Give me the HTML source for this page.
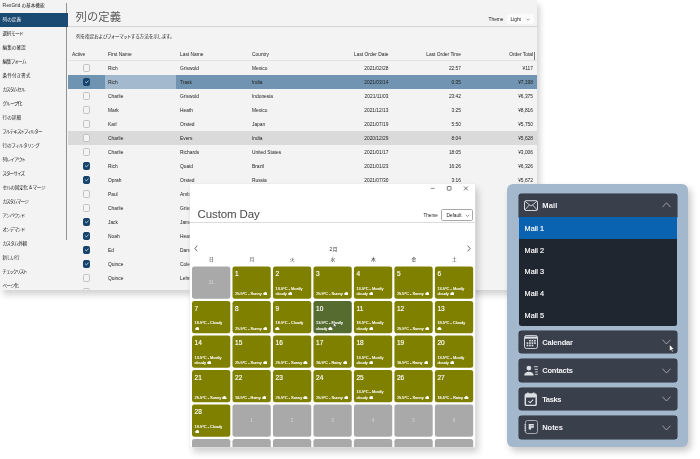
<!DOCTYPE html>
<html lang="ja"><head><meta charset="utf-8"><title>UI</title>
<style>
*{box-sizing:border-box;margin:0;padding:0}
html,body{width:700px;height:459px;overflow:hidden;background:#fff}
body{position:relative;font-family:"Liberation Sans","Noto Sans CJK JP",sans-serif;color:#222}
.abs{position:absolute}
#w1,#w2,#w3{will-change:transform}
#w1{position:absolute;left:0;top:0;width:537px;height:290px;background:#f3f3f3;box-shadow:3px 5px 6px rgba(0,0,0,.17);overflow:hidden}
#w1 .side{position:absolute;left:0;top:0;width:68px;height:290px}
#w1 .si{font-feature-settings:"palt";position:absolute;left:0;width:68px;height:14px;line-height:14px;font-size:4.6px;padding-left:2.5px;color:#222;white-space:nowrap}
#w1 .si.sel{background:#1b4a73;color:#fff}
#w1 .vbar{position:absolute;left:66px;top:3px;width:1px;height:237px;background:#929292}
#w1 h1{position:absolute;left:75.5px;top:9.2px;font-size:11.3px;line-height:16px;font-weight:normal;color:#5a5a5a;letter-spacing:.1px}
#w1 .hr{position:absolute;left:68px;top:26px;width:469px;height:1px;background:#d4d4d4}
#w1 .desc{position:absolute;left:76px;top:32px;font-size:4.6px;line-height:10px;color:#222;white-space:nowrap;font-feature-settings:"palt";letter-spacing:.08px}
#w1 .thl{position:absolute;left:488.6px;top:14.9px;font-size:4.8px;line-height:10px;color:#222}
#w1 .thb{position:absolute;left:507px;top:14px;width:27px;height:10px;background:#fbfbfb;border-radius:1.5px;font-size:4.8px;line-height:11.8px;padding-left:3.5px;color:#222}
.row{position:absolute;left:68px;width:469px;height:14px;font-size:4.85px;line-height:14px;color:#222;white-space:nowrap}
.row span{position:absolute;top:1.1px}
.row .c1{left:40px}.row .c2{left:112px}.row .c3{left:184px}
.row .c4{right:148.5px}.row .c5{right:76px}.row .c6{right:4px}
.row.hd{color:#222}
.row.selr{background:#7094b1}
.row.selr .a{position:absolute;left:0;top:0;width:36.5px;height:14px;background:#6e94b2}
.row.selr .b{position:absolute;left:36.5px;top:0;width:71.5px;height:14px;background:#a3bace}
.row.alt{background:#dadada}
.cb{position:absolute;left:14.7px;top:3.3px;width:7.6px;height:7.6px;border:.6px solid #c2c2c2;border-radius:1.7px;background:#f4f4f4}
.cb.on{background:#17446c;border-color:#17446c}
.cb.on svg{position:absolute;left:0;top:0;width:100%;height:100%}

#w2{position:absolute;left:190px;top:184px;width:284.6px;height:263px;background:#fff;box-shadow:0 0 0 .4px #e6e6e6,3px 5px 7px rgba(0,0,0,.2);overflow:hidden}
#w2 h2{position:absolute;left:7.5px;top:20px;font-size:11.5px;line-height:20px;font-weight:normal;color:#484848;white-space:nowrap;letter-spacing:-.1px}
#w2 .hr{position:absolute;left:0;top:38px;width:285px;height:1px;background:#dcdcdc}
#w2 .thl{position:absolute;left:233.5px;top:26.5px;font-size:4.6px;line-height:10px;color:#222}
#w2 .thb{position:absolute;left:251.2px;top:25.3px;width:32px;height:12.2px;border:.6px solid #a8a8a8;border-radius:1.7px;font-size:4.8px;line-height:11px;padding-left:4.2px;color:#222;background:#fff}
#w2 .mon{position:absolute;left:1.5px;width:284px;top:60px;text-align:center;font-size:5px;line-height:10px;color:#333}
#w2 .dh{position:absolute;top:70.8px;width:39px;text-align:center;font-size:4.8px;line-height:10px;color:#333}
.cell{position:absolute;width:38.3px;height:32.4px;color:#fff}
.cell .n{position:absolute;left:2.6px;top:2.7px;font-size:6.5px;line-height:9px;-webkit-text-stroke:.15px #fff}
.cell .gn{position:absolute;left:0;top:12px;width:100%;text-align:center;font-size:4.6px;line-height:10px;color:#d6d6d6}
.cell .w{position:absolute;left:2.5px;bottom:2.5px;font-size:3.95px;line-height:5.2px;white-space:nowrap;color:#fff;-webkit-text-stroke:.12px #fff}
.cell .w svg{display:inline-block;width:4.4px;height:3.1px;vertical-align:-.45px}

#w3{position:absolute;left:507px;top:184px;width:181px;height:263px;background:#a3b8cc;border-radius:6px;box-shadow:3px 4px 7px rgba(0,0,0,.22)}
.ah{position:absolute;left:12.2px;width:157.6px;height:22.5px;background:#3a3f4c;border-radius:2.8px;color:#f2f3f5;font-size:7.5px;font-weight:bold;line-height:24.2px;padding-left:23px;box-shadow:0 0 0 .5px #2a2e38}
.ah svg.ic{position:absolute;left:5.3px;top:4.1px;width:14px;height:14px}
.ah svg.ch{position:absolute;right:5.4px;top:8.6px;width:9px;height:6px}
.ai{position:absolute;left:11.6px;width:158.2px;height:21.8px;background:#20262f;color:#fff;font-size:7.3px;line-height:23.6px;padding-left:6px;-webkit-text-stroke:.15px #fff}
.ai.sel{background:#0a63b1}
</style></head><body>

<div id="w1">
<div class="vbar"></div><div class="side">
<div class="si" style="top:-1.3px;letter-spacing:0.050px">FlexGrid の基本機能</div>
<div class="si sel" style="top:12.7px;letter-spacing:0.150px">列の定義</div>
<div class="si" style="top:26.7px;letter-spacing:-0.240px">選択モード</div>
<div class="si" style="top:40.7px;letter-spacing:0.100px">編集の確認</div>
<div class="si" style="top:54.7px;letter-spacing:-0.250px">編集フォーム</div>
<div class="si" style="top:68.7px;letter-spacing:0.167px">条件付き書式</div>
<div class="si" style="top:82.7px;letter-spacing:-0.483px">カスタムセル</div>
<div class="si" style="top:96.7px;letter-spacing:-0.400px">グループ化</div>
<div class="si" style="top:110.7px;letter-spacing:0.150px">行の詳細</div>
<div class="si" style="top:124.7px;letter-spacing:-0.427px">フルテキストフィルター</div>
<div class="si" style="top:138.7px;letter-spacing:0.056px">行のフィルタリング</div>
<div class="si" style="top:152.7px;letter-spacing:-0.333px">列レイアウト</div>
<div class="si" style="top:166.7px;letter-spacing:-0.517px">スターサイズ</div>
<div class="si" style="top:180.7px;letter-spacing:-0.242px">セルの固定化 &amp; マージ</div>
<div class="si" style="top:194.7px;letter-spacing:-0.571px">カスタムマージ</div>
<div class="si" style="top:208.7px;letter-spacing:-0.400px">アンバウンド</div>
<div class="si" style="top:222.7px;letter-spacing:-0.400px">オンデマンド</div>
<div class="si" style="top:236.7px;letter-spacing:-0.267px">カスタム外観</div>
<div class="si" style="top:250.7px;letter-spacing:-0.100px">新しい行</div>
<div class="si" style="top:264.7px;letter-spacing:-0.400px">チェックリスト</div>
<div class="si" style="top:278.7px;letter-spacing:-0.600px">ページ化</div>
</div>
<h1>列の定義</h1><div class="hr"></div>
<div class="thl">Theme</div><div class="thb">Light<svg class="abs" style="left:19px;top:4px;width:4.2px;height:3px" viewBox="0 0 8 5"><path d="M1 1 L4 4 L7 1" fill="none" stroke="#555" stroke-width="1"/></svg></div>
<div class="desc">列を指定およびフォーマットする方法を示します。</div>
<div class="row hd" style="top:46.9px"><span style="left:4px">Active</span><span class="c1">First Name</span><span class="c2">Last Name</span><span class="c3">Country</span><span class="c4">Last Order Date</span><span class="c5">Last Order Time</span><span class="c6">Order Total</span></div>
<div class="abs" style="left:68px;top:60px;width:469px;height:.6px;background:#e2e2e2"></div>
<div class="abs" style="left:534.2px;top:51.5px;width:.6px;height:8px;background:#777"></div>
<div class="row" style="top:61px">
<div class="cb"></div>
<span class="c1">Rich</span><span class="c2">Griswold</span><span class="c3">Mexico</span><span class="c4">2021/02/28</span><span class="c5">22:57</span><span class="c6">¥117</span></div>
<div class="row selr" style="top:75px">
<div class="a"></div><div class="b"></div>
<div class="cb on"><svg viewBox="0 0 10 10"><path d="M2.4 5.2 L4.3 7 L7.8 3.2" fill="none" stroke="#fff" stroke-width="1.2" stroke-linecap="round" stroke-linejoin="round"/></svg></div>
<span class="c1">Rich</span><span class="c2">Trask</span><span class="c3">India</span><span class="c4">2021/03/14</span><span class="c5">0:35</span><span class="c6">¥7,198</span></div>
<div class="row" style="top:89px">
<div class="cb"></div>
<span class="c1">Charlie</span><span class="c2">Griswold</span><span class="c3">Indonesia</span><span class="c4">2021/11/03</span><span class="c5">23:42</span><span class="c6">¥6,375</span></div>
<div class="row" style="top:103px">
<div class="cb"></div>
<span class="c1">Mark</span><span class="c2">Heath</span><span class="c3">Mexico</span><span class="c4">2021/12/13</span><span class="c5">3:25</span><span class="c6">¥8,816</span></div>
<div class="row" style="top:117px">
<div class="cb"></div>
<span class="c1">Karl</span><span class="c2">Orsted</span><span class="c3">Japan</span><span class="c4">2021/07/19</span><span class="c5">5:50</span><span class="c6">¥5,750</span></div>
<div class="row alt" style="top:131px">
<div class="cb"></div>
<span class="c1">Charlie</span><span class="c2">Evers</span><span class="c3">India</span><span class="c4">2020/12/29</span><span class="c5">8:04</span><span class="c6">¥5,628</span></div>
<div class="row" style="top:145px">
<div class="cb"></div>
<span class="c1">Charlie</span><span class="c2">Richards</span><span class="c3">United States</span><span class="c4">2021/01/17</span><span class="c5">18:05</span><span class="c6">¥3,006</span></div>
<div class="row" style="top:159px">
<div class="cb on"><svg viewBox="0 0 10 10"><path d="M2.4 5.2 L4.3 7 L7.8 3.2" fill="none" stroke="#fff" stroke-width="1.2" stroke-linecap="round" stroke-linejoin="round"/></svg></div>
<span class="c1">Rich</span><span class="c2">Quaid</span><span class="c3">Brazil</span><span class="c4">2021/01/23</span><span class="c5">16:26</span><span class="c6">¥6,326</span></div>
<div class="row" style="top:173px">
<div class="cb on"><svg viewBox="0 0 10 10"><path d="M2.4 5.2 L4.3 7 L7.8 3.2" fill="none" stroke="#fff" stroke-width="1.2" stroke-linecap="round" stroke-linejoin="round"/></svg></div>
<span class="c1">Oprah</span><span class="c2">Orsted</span><span class="c3">Russia</span><span class="c4">2021/07/30</span><span class="c5">3:16</span><span class="c6">¥5,672</span></div>
<div class="row" style="top:187px">
<div class="cb"></div>
<span class="c1">Paul</span><span class="c2">Ambers</span><span class="c3">Germany</span><span class="c4">2021/05/09</span><span class="c5">11:42</span><span class="c6">¥1,204</span></div>
<div class="row" style="top:201px">
<div class="cb"></div>
<span class="c1">Charlie</span><span class="c2">Griswold</span><span class="c3">Italy</span><span class="c4">2021/08/21</span><span class="c5">9:18</span><span class="c6">¥4,391</span></div>
<div class="row" style="top:215px">
<div class="cb on"><svg viewBox="0 0 10 10"><path d="M2.4 5.2 L4.3 7 L7.8 3.2" fill="none" stroke="#fff" stroke-width="1.2" stroke-linecap="round" stroke-linejoin="round"/></svg></div>
<span class="c1">Jack</span><span class="c2">James</span><span class="c3">Greece</span><span class="c4">2021/04/02</span><span class="c5">14:07</span><span class="c6">¥2,870</span></div>
<div class="row" style="top:229px">
<div class="cb on"><svg viewBox="0 0 10 10"><path d="M2.4 5.2 L4.3 7 L7.8 3.2" fill="none" stroke="#fff" stroke-width="1.2" stroke-linecap="round" stroke-linejoin="round"/></svg></div>
<span class="c1">Noah</span><span class="c2">Heath</span><span class="c3">Japan</span><span class="c4">2021/09/15</span><span class="c5">20:33</span><span class="c6">¥9,015</span></div>
<div class="row" style="top:243px">
<div class="cb on"><svg viewBox="0 0 10 10"><path d="M2.4 5.2 L4.3 7 L7.8 3.2" fill="none" stroke="#fff" stroke-width="1.2" stroke-linecap="round" stroke-linejoin="round"/></svg></div>
<span class="c1">Ed</span><span class="c2">Danson</span><span class="c3">Korea</span><span class="c4">2021/06/27</span><span class="c5">7:51</span><span class="c6">¥3,482</span></div>
<div class="row" style="top:257px">
<div class="cb on"><svg viewBox="0 0 10 10"><path d="M2.4 5.2 L4.3 7 L7.8 3.2" fill="none" stroke="#fff" stroke-width="1.2" stroke-linecap="round" stroke-linejoin="round"/></svg></div>
<span class="c1">Quince</span><span class="c2">Cole</span><span class="c3">Spain</span><span class="c4">2021/10/11</span><span class="c5">12:29</span><span class="c6">¥7,760</span></div>
<div class="row" style="top:271px">
<div class="cb"></div>
<span class="c1">Quince</span><span class="c2">Lehman</span><span class="c3">France</span><span class="c4">2021/02/05</span><span class="c5">1:44</span><span class="c6">¥6,143</span></div>
<div class="row" style="top:285px">
<div class="cb"></div>
<span class="c1"></span><span class="c2"></span><span class="c3"></span><span class="c4"></span><span class="c5"></span><span class="c6"></span></div>
</div>
<div id="w2">
<svg class="abs" style="left:238px;top:0;width:44px;height:9px" viewBox="0 0 44 9"><path d="M2.8 4.4 H6.6" stroke="#444" stroke-width=".6"/><rect x="19.3" y="2.5" width="3.7" height="3.7" rx=".5" fill="none" stroke="#333" stroke-width=".65"/><path d="M35.9 2.4 L39.9 6.4 M39.9 2.4 L35.9 6.4" stroke="#333" stroke-width=".65"/></svg>
<h2>Custom Day</h2><div class="hr"></div>
<div class="thl">Theme</div><div class="thb">Default<svg class="abs" style="left:23px;top:3.6px;width:5px;height:3.2px" viewBox="0 0 8 5"><path d="M1 1 L4 4 L7 1" fill="none" stroke="#555" stroke-width="1"/></svg></div>
<svg class="abs" style="left:4.4px;top:60.7px;width:4px;height:7px" viewBox="0 0 4 7"><path d="M3.3 .7 L.9 3.5 L3.3 6.3" fill="none" stroke="#444" stroke-width=".8"/></svg>
<svg class="abs" style="left:277px;top:61px;width:4px;height:7px" viewBox="0 0 4 7"><path d="M.7 .7 L3.1 3.5 L.7 6.3" fill="none" stroke="#444" stroke-width=".8"/></svg>
<div class="mon">2月</div>
<div class="dh" style="left:2.00px">日</div>
<div class="dh" style="left:42.48px">月</div>
<div class="dh" style="left:82.96px">火</div>
<div class="dh" style="left:123.44px">水</div>
<div class="dh" style="left:163.92px">木</div>
<div class="dh" style="left:204.40px">金</div>
<div class="dh" style="left:244.88px">土</div>
<svg class="abs" style="left:0;top:0;width:285px;height:263px" viewBox="0 0 285 263">
<rect x="2.00" y="82.45" width="38.3" height="32.4" rx="2.4" fill="#a9a9a9"/>
<rect x="42.48" y="82.45" width="38.3" height="32.4" rx="2.4" fill="#808000"/>
<rect x="82.96" y="82.45" width="38.3" height="32.4" rx="2.4" fill="#808000"/>
<rect x="123.44" y="82.45" width="38.3" height="32.4" rx="2.4" fill="#808000"/>
<rect x="163.92" y="82.45" width="38.3" height="32.4" rx="2.4" fill="#808000"/>
<rect x="204.40" y="82.45" width="38.3" height="32.4" rx="2.4" fill="#808000"/>
<rect x="244.88" y="82.45" width="38.3" height="32.4" rx="2.4" fill="#808000"/>
<rect x="2.00" y="116.95" width="38.3" height="32.4" rx="2.4" fill="#808000"/>
<rect x="42.48" y="116.95" width="38.3" height="32.4" rx="2.4" fill="#808000"/>
<rect x="82.96" y="116.95" width="38.3" height="32.4" rx="2.4" fill="#808000"/>
<rect x="123.44" y="116.95" width="38.3" height="32.4" rx="2.4" fill="#556b2f"/>
<rect x="163.92" y="116.95" width="38.3" height="32.4" rx="2.4" fill="#808000"/>
<rect x="204.40" y="116.95" width="38.3" height="32.4" rx="2.4" fill="#808000"/>
<rect x="244.88" y="116.95" width="38.3" height="32.4" rx="2.4" fill="#808000"/>
<rect x="2.00" y="151.45" width="38.3" height="32.4" rx="2.4" fill="#808000"/>
<rect x="42.48" y="151.45" width="38.3" height="32.4" rx="2.4" fill="#808000"/>
<rect x="82.96" y="151.45" width="38.3" height="32.4" rx="2.4" fill="#808000"/>
<rect x="123.44" y="151.45" width="38.3" height="32.4" rx="2.4" fill="#808000"/>
<rect x="163.92" y="151.45" width="38.3" height="32.4" rx="2.4" fill="#808000"/>
<rect x="204.40" y="151.45" width="38.3" height="32.4" rx="2.4" fill="#808000"/>
<rect x="244.88" y="151.45" width="38.3" height="32.4" rx="2.4" fill="#808000"/>
<rect x="2.00" y="185.95" width="38.3" height="32.4" rx="2.4" fill="#808000"/>
<rect x="42.48" y="185.95" width="38.3" height="32.4" rx="2.4" fill="#808000"/>
<rect x="82.96" y="185.95" width="38.3" height="32.4" rx="2.4" fill="#808000"/>
<rect x="123.44" y="185.95" width="38.3" height="32.4" rx="2.4" fill="#808000"/>
<rect x="163.92" y="185.95" width="38.3" height="32.4" rx="2.4" fill="#808000"/>
<rect x="204.40" y="185.95" width="38.3" height="32.4" rx="2.4" fill="#808000"/>
<rect x="244.88" y="185.95" width="38.3" height="32.4" rx="2.4" fill="#808000"/>
<rect x="2.00" y="220.45" width="38.3" height="32.4" rx="2.4" fill="#808000"/>
<rect x="42.48" y="220.45" width="38.3" height="32.4" rx="2.4" fill="#a9a9a9"/>
<rect x="82.96" y="220.45" width="38.3" height="32.4" rx="2.4" fill="#a9a9a9"/>
<rect x="123.44" y="220.45" width="38.3" height="32.4" rx="2.4" fill="#a9a9a9"/>
<rect x="163.92" y="220.45" width="38.3" height="32.4" rx="2.4" fill="#a9a9a9"/>
<rect x="204.40" y="220.45" width="38.3" height="32.4" rx="2.4" fill="#a9a9a9"/>
<rect x="244.88" y="220.45" width="38.3" height="32.4" rx="2.4" fill="#a9a9a9"/>
<rect x="2.00" y="254.95" width="38.3" height="32.4" rx="2.4" fill="#a9a9a9"/>
<rect x="42.48" y="254.95" width="38.3" height="32.4" rx="2.4" fill="#a9a9a9"/>
<rect x="82.96" y="254.95" width="38.3" height="32.4" rx="2.4" fill="#a9a9a9"/>
<rect x="123.44" y="254.95" width="38.3" height="32.4" rx="2.4" fill="#a9a9a9"/>
<rect x="163.92" y="254.95" width="38.3" height="32.4" rx="2.4" fill="#a9a9a9"/>
<rect x="204.40" y="254.95" width="38.3" height="32.4" rx="2.4" fill="#a9a9a9"/>
<rect x="244.88" y="254.95" width="38.3" height="32.4" rx="2.4" fill="#a9a9a9"/>
</svg>
<div class="cell g" style="left:2.00px;top:82.45px"><div class="gn">31</div></div>
<div class="cell" style="left:42.48px;top:82.45px"><div class="n">1</div><div class="w">25.5°C - Sunny <svg viewBox="0 0 12 8"><path d="M3 8 A3 3 0 0 1 3.2 2.1 A4 4 0 0 1 10.6 3.1 A2.5 2.5 0 0 1 10.3 8 Z" fill="#fff"/></svg></div></div>
<div class="cell" style="left:82.96px;top:82.45px"><div class="n">2</div><div class="w">13.5°C - Mostly<br>cloudy <svg viewBox="0 0 12 8"><path d="M3 8 A3 3 0 0 1 3.2 2.1 A4 4 0 0 1 10.6 3.1 A2.5 2.5 0 0 1 10.3 8 Z" fill="#fff"/></svg></div></div>
<div class="cell" style="left:123.44px;top:82.45px"><div class="n">3</div><div class="w">25.5°C - Sunny <svg viewBox="0 0 12 8"><path d="M3 8 A3 3 0 0 1 3.2 2.1 A4 4 0 0 1 10.6 3.1 A2.5 2.5 0 0 1 10.3 8 Z" fill="#fff"/></svg></div></div>
<div class="cell" style="left:163.92px;top:82.45px"><div class="n">4</div><div class="w">13.5°C - Mostly<br>cloudy <svg viewBox="0 0 12 8"><path d="M3 8 A3 3 0 0 1 3.2 2.1 A4 4 0 0 1 10.6 3.1 A2.5 2.5 0 0 1 10.3 8 Z" fill="#fff"/></svg></div></div>
<div class="cell" style="left:204.40px;top:82.45px"><div class="n">5</div><div class="w">25.5°C - Sunny <svg viewBox="0 0 12 8"><path d="M3 8 A3 3 0 0 1 3.2 2.1 A4 4 0 0 1 10.6 3.1 A2.5 2.5 0 0 1 10.3 8 Z" fill="#fff"/></svg></div></div>
<div class="cell" style="left:244.88px;top:82.45px"><div class="n">6</div><div class="w">13.5°C - Mostly<br>cloudy <svg viewBox="0 0 12 8"><path d="M3 8 A3 3 0 0 1 3.2 2.1 A4 4 0 0 1 10.6 3.1 A2.5 2.5 0 0 1 10.3 8 Z" fill="#fff"/></svg></div></div>
<div class="cell" style="left:2.00px;top:116.95px"><div class="n">7</div><div class="w">18.5°C - Cloudy<br><svg viewBox="0 0 12 8"><path d="M3 8 A3 3 0 0 1 3.2 2.1 A4 4 0 0 1 10.6 3.1 A2.5 2.5 0 0 1 10.3 8 Z" fill="#fff"/></svg></div></div>
<div class="cell" style="left:42.48px;top:116.95px"><div class="n">8</div><div class="w">25.5°C - Sunny <svg viewBox="0 0 12 8"><path d="M3 8 A3 3 0 0 1 3.2 2.1 A4 4 0 0 1 10.6 3.1 A2.5 2.5 0 0 1 10.3 8 Z" fill="#fff"/></svg></div></div>
<div class="cell" style="left:82.96px;top:116.95px"><div class="n">9</div><div class="w">18.5°C - Cloudy<br><svg viewBox="0 0 12 8"><path d="M3 8 A3 3 0 0 1 3.2 2.1 A4 4 0 0 1 10.6 3.1 A2.5 2.5 0 0 1 10.3 8 Z" fill="#fff"/></svg></div></div>
<div class="cell t" style="left:123.44px;top:116.95px"><div class="n">10</div><div class="w">13.5°C - Mostly<br>cloudy <svg viewBox="0 0 12 8"><path d="M3 8 A3 3 0 0 1 3.2 2.1 A4 4 0 0 1 10.6 3.1 A2.5 2.5 0 0 1 10.3 8 Z" fill="#fff"/></svg></div></div>
<div class="cell" style="left:163.92px;top:116.95px"><div class="n">11</div><div class="w">18.5°C - Mostly<br>cloudy <svg viewBox="0 0 12 8"><path d="M3 8 A3 3 0 0 1 3.2 2.1 A4 4 0 0 1 10.6 3.1 A2.5 2.5 0 0 1 10.3 8 Z" fill="#fff"/></svg></div></div>
<div class="cell" style="left:204.40px;top:116.95px"><div class="n">12</div><div class="w">25.5°C - Sunny <svg viewBox="0 0 12 8"><path d="M3 8 A3 3 0 0 1 3.2 2.1 A4 4 0 0 1 10.6 3.1 A2.5 2.5 0 0 1 10.3 8 Z" fill="#fff"/></svg></div></div>
<div class="cell" style="left:244.88px;top:116.95px"><div class="n">13</div><div class="w">18.5°C - Cloudy<br><svg viewBox="0 0 12 8"><path d="M3 8 A3 3 0 0 1 3.2 2.1 A4 4 0 0 1 10.6 3.1 A2.5 2.5 0 0 1 10.3 8 Z" fill="#fff"/></svg></div></div>
<div class="cell" style="left:2.00px;top:151.45px"><div class="n">14</div><div class="w">13.5°C - Mostly<br>cloudy <svg viewBox="0 0 12 8"><path d="M3 8 A3 3 0 0 1 3.2 2.1 A4 4 0 0 1 10.6 3.1 A2.5 2.5 0 0 1 10.3 8 Z" fill="#fff"/></svg></div></div>
<div class="cell" style="left:42.48px;top:151.45px"><div class="n">15</div><div class="w">25.5°C - Sunny <svg viewBox="0 0 12 8"><path d="M3 8 A3 3 0 0 1 3.2 2.1 A4 4 0 0 1 10.6 3.1 A2.5 2.5 0 0 1 10.3 8 Z" fill="#fff"/></svg></div></div>
<div class="cell" style="left:82.96px;top:151.45px"><div class="n">16</div><div class="w">25.5°C - Sunny <svg viewBox="0 0 12 8"><path d="M3 8 A3 3 0 0 1 3.2 2.1 A4 4 0 0 1 10.6 3.1 A2.5 2.5 0 0 1 10.3 8 Z" fill="#fff"/></svg></div></div>
<div class="cell" style="left:123.44px;top:151.45px"><div class="n">17</div><div class="w">16.5°C - Rainy <svg viewBox="0 0 12 8"><path d="M3 8 A3 3 0 0 1 3.2 2.1 A4 4 0 0 1 10.6 3.1 A2.5 2.5 0 0 1 10.3 8 Z" fill="#fff"/></svg></div></div>
<div class="cell" style="left:163.92px;top:151.45px"><div class="n">18</div><div class="w">13.5°C - Mostly<br>cloudy <svg viewBox="0 0 12 8"><path d="M3 8 A3 3 0 0 1 3.2 2.1 A4 4 0 0 1 10.6 3.1 A2.5 2.5 0 0 1 10.3 8 Z" fill="#fff"/></svg></div></div>
<div class="cell" style="left:204.40px;top:151.45px"><div class="n">19</div><div class="w">16.5°C - Rainy <svg viewBox="0 0 12 8"><path d="M3 8 A3 3 0 0 1 3.2 2.1 A4 4 0 0 1 10.6 3.1 A2.5 2.5 0 0 1 10.3 8 Z" fill="#fff"/></svg></div></div>
<div class="cell" style="left:244.88px;top:151.45px"><div class="n">20</div><div class="w">13.5°C - Mostly<br>cloudy <svg viewBox="0 0 12 8"><path d="M3 8 A3 3 0 0 1 3.2 2.1 A4 4 0 0 1 10.6 3.1 A2.5 2.5 0 0 1 10.3 8 Z" fill="#fff"/></svg></div></div>
<div class="cell" style="left:2.00px;top:185.95px"><div class="n">21</div><div class="w">25.5°C - Sunny <svg viewBox="0 0 12 8"><path d="M3 8 A3 3 0 0 1 3.2 2.1 A4 4 0 0 1 10.6 3.1 A2.5 2.5 0 0 1 10.3 8 Z" fill="#fff"/></svg></div></div>
<div class="cell" style="left:42.48px;top:185.95px"><div class="n">22</div><div class="w">16.5°C - Rainy <svg viewBox="0 0 12 8"><path d="M3 8 A3 3 0 0 1 3.2 2.1 A4 4 0 0 1 10.6 3.1 A2.5 2.5 0 0 1 10.3 8 Z" fill="#fff"/></svg></div></div>
<div class="cell" style="left:82.96px;top:185.95px"><div class="n">23</div><div class="w">25.5°C - Sunny <svg viewBox="0 0 12 8"><path d="M3 8 A3 3 0 0 1 3.2 2.1 A4 4 0 0 1 10.6 3.1 A2.5 2.5 0 0 1 10.3 8 Z" fill="#fff"/></svg></div></div>
<div class="cell" style="left:123.44px;top:185.95px"><div class="n">24</div><div class="w">25.5°C - Sunny <svg viewBox="0 0 12 8"><path d="M3 8 A3 3 0 0 1 3.2 2.1 A4 4 0 0 1 10.6 3.1 A2.5 2.5 0 0 1 10.3 8 Z" fill="#fff"/></svg></div></div>
<div class="cell" style="left:163.92px;top:185.95px"><div class="n">25</div><div class="w">13.5°C - Mostly<br>cloudy <svg viewBox="0 0 12 8"><path d="M3 8 A3 3 0 0 1 3.2 2.1 A4 4 0 0 1 10.6 3.1 A2.5 2.5 0 0 1 10.3 8 Z" fill="#fff"/></svg></div></div>
<div class="cell" style="left:204.40px;top:185.95px"><div class="n">26</div><div class="w">25.5°C - Sunny <svg viewBox="0 0 12 8"><path d="M3 8 A3 3 0 0 1 3.2 2.1 A4 4 0 0 1 10.6 3.1 A2.5 2.5 0 0 1 10.3 8 Z" fill="#fff"/></svg></div></div>
<div class="cell" style="left:244.88px;top:185.95px"><div class="n">27</div><div class="w">16.5°C - Rainy <svg viewBox="0 0 12 8"><path d="M3 8 A3 3 0 0 1 3.2 2.1 A4 4 0 0 1 10.6 3.1 A2.5 2.5 0 0 1 10.3 8 Z" fill="#fff"/></svg></div></div>
<div class="cell" style="left:2.00px;top:220.45px"><div class="n">28</div><div class="w">18.5°C - Cloudy<br><svg viewBox="0 0 12 8"><path d="M3 8 A3 3 0 0 1 3.2 2.1 A4 4 0 0 1 10.6 3.1 A2.5 2.5 0 0 1 10.3 8 Z" fill="#fff"/></svg></div></div>
<div class="cell g" style="left:42.48px;top:220.45px"><div class="gn">1</div></div>
<div class="cell g" style="left:82.96px;top:220.45px"><div class="gn">2</div></div>
<div class="cell g" style="left:123.44px;top:220.45px"><div class="gn">3</div></div>
<div class="cell g" style="left:163.92px;top:220.45px"><div class="gn">4</div></div>
<div class="cell g" style="left:204.40px;top:220.45px"><div class="gn">5</div></div>
<div class="cell g" style="left:244.88px;top:220.45px"><div class="gn">6</div></div>
<div class="cell g" style="left:2.00px;top:254.95px"><div class="gn">7</div></div>
<div class="cell g" style="left:42.48px;top:254.95px"><div class="gn">8</div></div>
<div class="cell g" style="left:82.96px;top:254.95px"><div class="gn">9</div></div>
<div class="cell g" style="left:123.44px;top:254.95px"><div class="gn">10</div></div>
<div class="cell g" style="left:163.92px;top:254.95px"><div class="gn">11</div></div>
<div class="cell g" style="left:204.40px;top:254.95px"><div class="gn">12</div></div>
<div class="cell g" style="left:244.88px;top:254.95px"><div class="gn">13</div></div>
</div>
<div id="w3">
<div class="ah" style="top:9.5px;height:23.5px;line-height:24.6px;border-radius:2.5px 2.5px 0 0;letter-spacing:.22px"><svg class="ic" viewBox="0 0 14 14"><rect x=".5" y="2.7" width="13" height="9.8" rx="1.5" fill="none" stroke="#dcdfe4" stroke-width=".95"/><path d="M1 3.4 L7 8 L13 3.4 M1 11.8 L5.4 6.9 M13 11.8 L8.6 6.9" fill="none" stroke="#dcdfe4" stroke-width=".85"/></svg>Mail<svg class="ch" viewBox="0 0 9 6"><path d="M.4 5.2 L4.5 .8 L8.6 5.2" fill="none" stroke="#b9bdc6" stroke-width=".75"/></svg></div>
<div class="ai sel" style="top:33.0px">Mail 1</div>
<div class="ai" style="top:54.7px">Mail 2</div>
<div class="ai" style="top:76.4px">Mail 3</div>
<div class="ai" style="top:98.1px">Mail 4</div>
<div class="ai" style="top:119.8px;border-radius:0 0 2.5px 2.5px">Mail 5</div>
<div class="ah" style="top:146.9px;letter-spacing:-0.19px"><svg class="ic" viewBox="0 0 14 14"><rect x=".5" y=".4" width="13" height="13.2" rx="2.2" fill="none" stroke="#dcdfe4" stroke-width=".95"/><path d="M.6 2.6 H13.4" stroke="#dcdfe4" stroke-width="2.2"/><g fill="#dcdfe4"><rect x="5.1" y="4.9" width="1.7" height="1.6"/><rect x="7.6" y="4.9" width="1.7" height="1.6"/><rect x="10.1" y="4.9" width="1.7" height="1.6"/><rect x="2.6" y="7.3" width="1.7" height="1.6"/><rect x="5.1" y="7.3" width="1.7" height="1.6"/><rect x="7.6" y="7.3" width="1.7" height="1.6"/><rect x="10.1" y="7.3" width="1.7" height="1.6"/><rect x="2.6" y="9.7" width="1.7" height="1.6"/><rect x="5.1" y="9.7" width="1.7" height="1.6"/><rect x="7.6" y="9.7" width="1.7" height="1.6"/></g></svg>Calendar<svg class="ch" viewBox="0 0 9 6"><path d="M.4 .6 L4.5 5 L8.6 .6" fill="none" stroke="#b9bdc6" stroke-width=".75"/></svg></div>
<div class="ah" style="top:175.3px;letter-spacing:-0.19px"><svg class="ic" viewBox="0 0 14 14"><circle cx="4.9" cy="5.1" r="2.4" fill="#dcdfe4"/><path d="M.2 12.6 C.2 10 2.2 8.8 4.9 8.8 C7.6 8.8 9.6 10 9.6 12.6 Z" fill="#dcdfe4"/><path d="M10 3.7 H13.8 M10.6 6.3 H13.8 M11.2 8.9 H13.8 M11.2 11.3 H13.8" stroke="#dcdfe4" stroke-width=".9"/></svg>Contacts<svg class="ch" viewBox="0 0 9 6"><path d="M.4 .6 L4.5 5 L8.6 .6" fill="none" stroke="#b9bdc6" stroke-width=".75"/></svg></div>
<div class="ah" style="top:203.7px;letter-spacing:-0.36px"><svg class="ic" viewBox="0 0 14 14"><rect x="1.3" y="1.9" width="10.9" height="11.6" rx="1.5" fill="none" stroke="#dcdfe4" stroke-width="1.5"/><rect x="1.3" y="1.9" width="10.9" height="3.6" rx="1" fill="#dcdfe4"/><path d="M3.9 .6 V2.6 M9.6 .6 V2.6" stroke="#dcdfe4" stroke-width="1.5"/><path d="M4.5 9.2 L6.1 10.8 L9.2 7.6" fill="none" stroke="#dcdfe4" stroke-width="1.1"/></svg>Tasks<svg class="ch" viewBox="0 0 9 6"><path d="M.4 .6 L4.5 5 L8.6 .6" fill="none" stroke="#b9bdc6" stroke-width=".75"/></svg></div>
<div class="ah" style="top:232.1px;letter-spacing:-0.03px"><svg class="ic" viewBox="0 0 14 14"><rect x="1.4" y=".5" width="12.1" height="13" rx="2" fill="none" stroke="#b9bdc6" stroke-width=".85"/><path d="M.4 4.9 H2.2 M.4 6.9 H2.2 M.4 8.8 H2.2 M.4 10.7 H2.2" stroke="#dcdfe4" stroke-width=".95"/><path d="M4.7 3.9 H9.9 V7.7 H7.2 V9.6 H4.7 Z" fill="#dcdfe4"/><path d="M6.4 5.7 H9.9" stroke="#3a3f4c" stroke-width=".5"/></svg>Notes<svg class="ch" viewBox="0 0 9 6"><path d="M.4 .6 L4.5 5 L8.6 .6" fill="none" stroke="#b9bdc6" stroke-width=".75"/></svg></div>
</div>
<svg class="abs" style="left:669.1px;top:343.8px;width:6px;height:9px" viewBox="-0.5 -0.5 6 9"><path d="M0 0 L0 6.6 L1.6 5.2 L2.7 7.6 L3.7 7.1 L2.6 4.8 L4.6 4.8 Z" fill="#fff" stroke="#222" stroke-width=".45"/></svg>
<svg class="abs" style="left:332.7px;top:321.6px;width:5px;height:7px" viewBox="-0.5 -0.5 5 7"><path d="M0 0 L0 4.4 L1.1 3.5 L1.8 5.1 L2.5 4.8 L1.8 3.2 L3.1 3.2 Z" fill="#fff" stroke="#333" stroke-width=".4"/></svg>
</body></html>
